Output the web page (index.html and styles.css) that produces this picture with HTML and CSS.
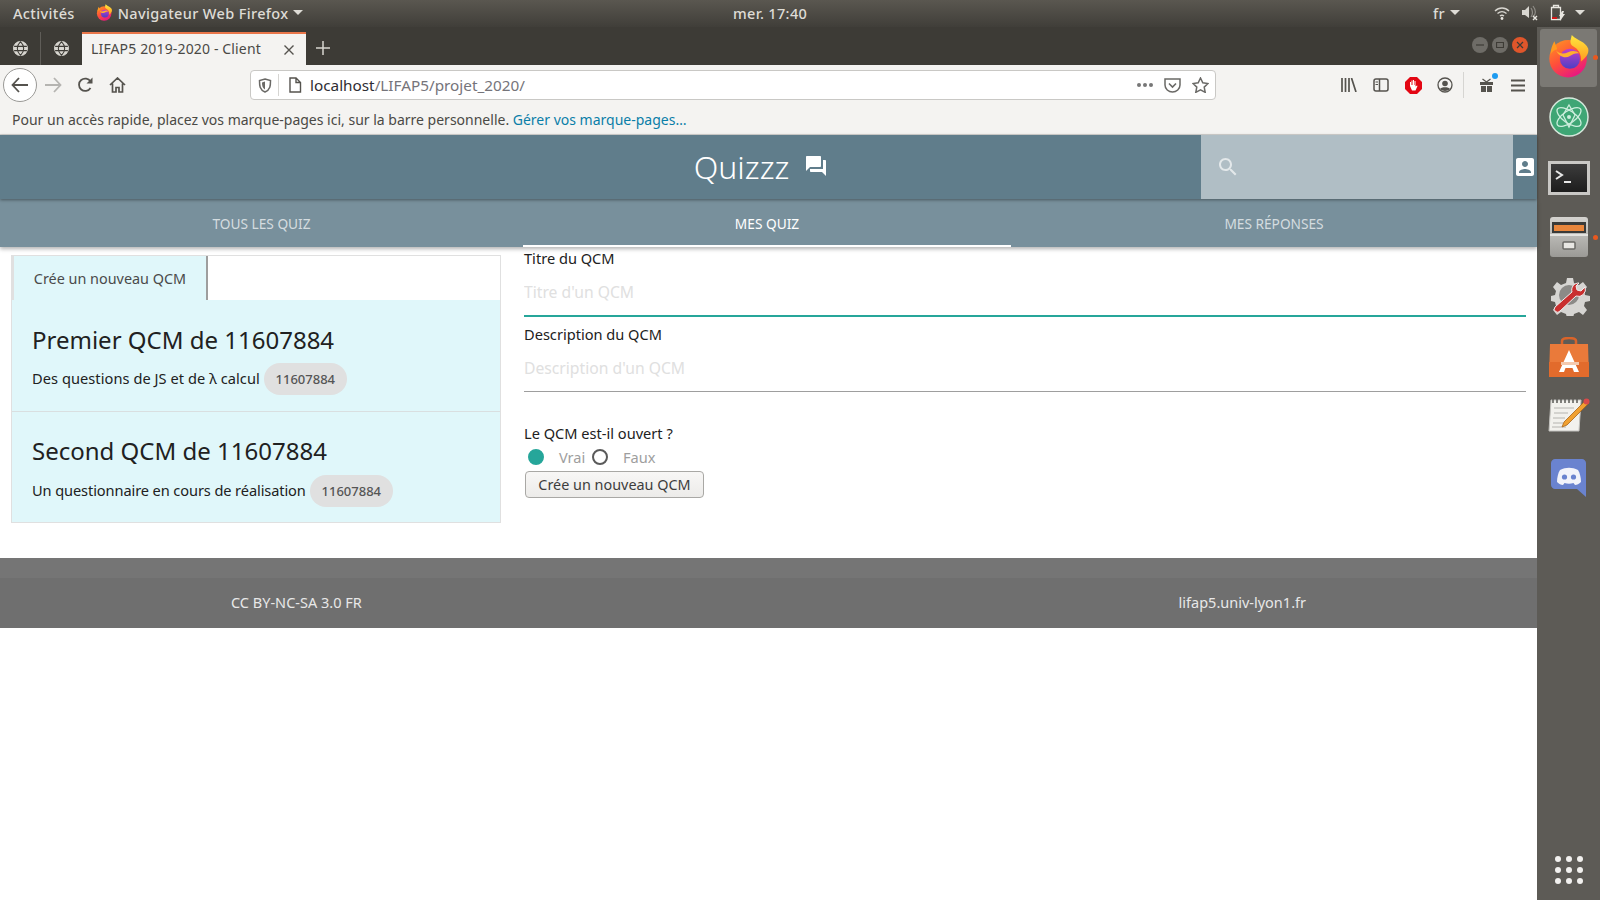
FILE: index.html
```html
<!DOCTYPE html>
<html lang="fr">

<head>
    <meta charset="UTF-8">
    <title>LIFAP5 2019-2020 - Client</title>
    <link rel="stylesheet" href="styles.css">
</head>

<body>
    <svg class="defs" width="0" height="0">
        <defs>
            <linearGradient id="ffBody" x1="0" y1="0" x2="0.6" y2="1">
                <stop offset="0" stop-color="#ff9a1f" />
                <stop offset="0.55" stop-color="#ff4f3a" />
                <stop offset="1" stop-color="#e8197f" />
            </linearGradient>
            <linearGradient id="ffFlame" x1="0.5" y1="0" x2="0.5" y2="1">
                <stop offset="0" stop-color="#ffe83f" />
                <stop offset="1" stop-color="#ff9a1f" />
            </linearGradient>
            <linearGradient id="ffCore" x1="0.5" y1="0" x2="0.5" y2="1">
                <stop offset="0" stop-color="#c23fc8" />
                <stop offset="1" stop-color="#4b3fc4" />
            </linearGradient>
            <linearGradient id="fileBody" x1="0.5" y1="0" x2="0.5" y2="1">
                <stop offset="0" stop-color="#d4d3cf" />
                <stop offset="1" stop-color="#9b9a96" />
            </linearGradient>
            <linearGradient id="termBody" x1="0.5" y1="0" x2="0.5" y2="1">
                <stop offset="0" stop-color="#3c3c3c" />
                <stop offset="1" stop-color="#1d1d1d" />
            </linearGradient>
            <symbol id="firefox" viewBox="0 0 48 48">
                <circle cx="23" cy="27" r="20.500" fill="url(#ffBody)" />
                <path d="M27 1c-1 5-3 9 1 12 6 3 10 9 9 17 5-4 9-8 8-14-3-8-11-8-18-15z" fill="url(#ffFlame)" />
                <path d="M8 8c-2 4-4 8-4 14 3-4 5-5 7-5 0-3-2-6-3-9z" fill="#ff9a1f" />
                <circle cx="25" cy="27" r="11" fill="url(#ffCore)" />
                <path d="M10 18c4 4 8 4 13 2 4-2 9-2 12 1-4-.5-7 1-10 3-5 3-12 1-15-6z" fill="#ffb02e" />
            </symbol>
            <symbol id="globe" viewBox="0 0 16 16">
                <circle cx="8" cy="8" r="6.500" fill="#d8d6d0" stroke="#d8d6d0" />
                <path d="M2 6h12M2 10h12M8 1.500c-4 4-4 9 0 13M8 1.500c4 4 4 9 0 13" fill="none" stroke="#3d3b36" stroke-width="1" />
            </symbol>
        </defs>
    </svg>

    <div class="topbar">
        <div class="top-left">
            <span class="top-activities">Activités</span>
            <svg class="top-ff" width="17" height="17"><use href="#firefox" /></svg>
            <span class="top-app">Navigateur Web Firefox</span>
            <span class="caret"></span>
        </div>
        <span class="top-clock">mer. 17:40</span>
        <div class="top-right">
            <span class="top-lang">fr</span>
            <span class="caret"></span>
            <svg class="top-wifi" width="16" height="14" viewBox="0 0 16 14">
                <path d="M1 5c4-4 10-4 14 0M3.500 7.500c3-2.500 6-2.500 9 0M6 10c1.300-1 2.700-1 4 0" fill="none" stroke="#d8d6d0" stroke-width="1.400" />
                <circle cx="8" cy="12.500" r="1.400" fill="#e8e6e0" />
            </svg>
            <svg class="top-sound" width="17" height="16" viewBox="0 0 17 16">
                <path d="M1 5h3l4-4v12l-4-3H1z" fill="#d8d6d0" />
                <path d="M10 3c2 3 2 6 0 9M12 1c3 4 3 8 0 11" fill="none" stroke="#8f8d87" stroke-width="1.200" />
                <path d="M12 11l4 4M16 11l-4 4" stroke="#e8e6e0" stroke-width="1.400" />
            </svg>
            <svg class="top-batt" width="16" height="18" viewBox="0 0 16 18">
                <path d="M1.500 3.500h9v12h-9zM3.500 1.500h5v2h-5z" fill="none" stroke="#e8e6e0" stroke-width="1.300" />
                <rect x="2" y="13" width="5" height="2" fill="#d01818" />
                <path d="M12 7l-3 5h2l-1 5 5-7h-2l1-3z" fill="#e8e6e0" />
            </svg>
            <span class="caret top-last"></span>
        </div>
    </div>

    <div class="desktop">
        <div class="browser">
            <div class="tabbar">
                <span class="pinned"><svg width="17" height="17"><use href="#globe" /></svg></span>
                <span class="pinned"><svg width="17" height="17"><use href="#globe" /></svg></span>
                <div class="tab">
                    <span class="tab-title">LIFAP5 2019-2020 - Client</span>
                    <svg width="12" height="12" viewBox="0 0 12 12">
                        <path d="M1.500 1.500l9 9M10.500 1.500l-9 9" stroke="#55534e" stroke-width="1.400" />
                    </svg>
                </div>
                <svg class="new-tab" width="14" height="14" viewBox="0 0 14 14">
                    <path d="M7 0v14M0 7h14" stroke="#d8d6d0" stroke-width="1.500" />
                </svg>
                <div class="win-btns">
                    <span class="win-btn"><svg width="8" height="8" viewBox="0 0 8 8"><path d="M0 4h8" stroke="#3d3b36" stroke-width="1.200" /></svg></span>
                    <span class="win-btn"><svg width="8" height="8" viewBox="0 0 8 8"><path d="M.5 1.500h7v5h-7z" fill="none" stroke="#3d3b36" stroke-width="1.200" /></svg></span>
                    <span class="win-btn win-close"><svg width="8" height="8" viewBox="0 0 8 8"><path d="M1 1l6 6M7 1l-6 6" stroke="#3d3b36" stroke-width="1.200" /></svg></span>
                </div>
            </div>

            <div class="toolbar">
                <span class="back">
                    <svg width="18" height="16" viewBox="0 0 18 16">
                        <path d="M8 1L1.500 8 8 15M2 8h15" fill="none" stroke="#55534e" stroke-width="1.800" />
                    </svg>
                </span>
                <span class="tool tool-forward">
                    <svg width="18" height="16" viewBox="0 0 18 16">
                        <path d="M10 1l6.500 7-6.500 7M16 8H1" fill="none" stroke="#b5b4b1" stroke-width="1.800" />
                    </svg>
                </span>
                <span class="tool">
                    <svg width="17" height="16" viewBox="0 0 17 16">
                        <path d="M13.500 11a6.200 6.200 0 1 1 0-6.500" fill="none" stroke="#55534e" stroke-width="1.800" />
                        <path d="M15.500 .5v6h-6z" fill="#55534e" />
                    </svg>
                </span>
                <span class="tool">
                    <svg width="17" height="16" viewBox="0 0 17 16">
                        <path d="M1 8l7.500-7L16 8M3.500 6.500V15h3.500v-4.500h3V15h3.500V6.500" fill="none" stroke="#55534e" stroke-width="1.700" />
                    </svg>
                </span>
                <div class="urlbar">
                    <svg class="url-shield" width="14" height="15" viewBox="0 0 14 15">
                        <path d="M7 1l5.500 1.500c0 5 0 9-5.500 11.500C1.500 11.500 1.500 7.500 1.500 2.500z" fill="none" stroke="#6a6966" stroke-width="1.500" />
                        <path d="M7 3.500v8c-2.500-1.500-3-3.500-3-7z" fill="#6a6966" />
                    </svg>
                    <span class="url-sep"></span>
                    <svg class="url-page" width="14" height="16" viewBox="0 0 14 16">
                        <path d="M2 1h6l4.500 4.500V15H2zM8 1v4.500h4.500" fill="none" stroke="#55534e" stroke-width="1.400" />
                    </svg>
                    <span class="url-text"><span class="url-host">localhost</span>/LIFAP5/projet_2020/</span>
                    <span class="url-dots"><i></i><i></i><i></i></span>
                    <svg class="url-pocket" width="17" height="15" viewBox="0 0 17 15">
                        <path d="M1 1h15v6c0 4-3.500 7-7.500 7S1 11 1 7z" fill="none" stroke="#6a6966" stroke-width="1.500" />
                        <path d="M5 5.500l3.500 3.500L12 5.500" fill="none" stroke="#6a6966" stroke-width="1.600" />
                    </svg>
                    <svg class="url-star" width="17" height="16" viewBox="0 0 17 16">
                        <path d="M8.500 1l2.300 4.800 5.200.7-3.800 3.600 1 5.200-4.700-2.500-4.700 2.500 1-5.200L1 6.500l5.200-.7z" fill="none" stroke="#6a6966" stroke-width="1.500" />
                    </svg>
                </div>
                <div class="tools-right">
                    <span class="tool">
                        <svg width="16" height="14" viewBox="0 0 16 14">
                            <path d="M1 0v14M4.500 0v14M8 0v14M10.500 0l4.500 14" stroke="#55534e" stroke-width="1.700" />
                        </svg>
                    </span>
                    <span class="tool">
                        <svg width="16" height="14" viewBox="0 0 16 14">
                            <rect x="1" y="1" width="14" height="12" rx="2" fill="none" stroke="#55534e" stroke-width="1.500" />
                            <path d="M6.500 1v12" stroke="#55534e" stroke-width="1.500" />
                            <path d="M2.500 4h2.500M2.500 6.500h2.500" stroke="#55534e" stroke-width="1" />
                        </svg>
                    </span>
                    <span class="tool">
                        <svg width="17" height="17" viewBox="0 0 17 17">
                            <path d="M5 0h7l5 5v7l-5 5H5l-5-5V5z" fill="#e30613" />
                            <path d="M5 9V5h1v3h.5V3.500h1V8H8V3h1v5h.5V4h1v5.500l1.500-1 .5.500-2 4.500H7z" fill="#fff" />
                        </svg>
                    </span>
                    <span class="tool">
                        <svg width="16" height="16" viewBox="0 0 16 16">
                            <circle cx="8" cy="8" r="7" fill="none" stroke="#55534e" stroke-width="1.300" />
                            <circle cx="8" cy="6.500" r="2.800" fill="#55534e" />
                            <path d="M3 12c1-2.500 9-2.500 10 0-2 2.500-8 2.500-10 0z" fill="#55534e" />
                        </svg>
                    </span>
                    <span class="tools-sep"></span>
                    <span class="tool tool-gift">
                        <svg width="15" height="15" viewBox="0 0 15 15">
                            <path d="M1 4h13v3H1zM2 8h5v6H2zM8 8h5v6H8z" fill="#55534e" />
                            <path d="M3.500 1l4 3 4-3" fill="none" stroke="#55534e" stroke-width="1.300" />
                        </svg>
                        <span class="gift-dot"></span>
                    </span>
                    <span class="tool">
                        <svg width="14" height="13" viewBox="0 0 14 13">
                            <path d="M0 1.500h14M0 6.500h14M0 11.500h14" stroke="#55534e" stroke-width="1.800" />
                        </svg>
                    </span>
                </div>
            </div>

            <div class="bookmarks">Pour un accès rapide, placez vos marque-pages ici, sur la barre personnelle. <a href="#">Gérer vos marque-pages…</a></div>

            <div class="page">
                <header class="app-header">
                    <div class="brand">
                        <span class="brand-name">Quizzz</span>
                        <svg width="24" height="24" viewBox="0 0 24 24" fill="#fff">
                            <path d="M21 6h-2v9H6v2c0 .55.45 1 1 1h11l4 4V7c0-.55-.45-1-1-1zm-4 6V3c0-.55-.45-1-1-1H3c-.55 0-1 .45-1 1v14l4-4h10c.55 0 1-.45 1-1z" />
                        </svg>
                    </div>
                    <div class="search">
                        <svg width="24" height="24" viewBox="0 0 24 24" fill="#e3e8ea">
                            <path d="M15.500 14h-.79l-.28-.27C15.410 12.590 16 11.110 16 9.500 16 5.910 13.090 3 9.500 3S3 5.910 3 9.500 5.910 16 9.500 16c1.610 0 3.090-.59 4.230-1.570l.27.28v.79l5 4.990L20.490 19l-4.990-5zm-6 0C7.010 14 5 11.990 5 9.500S7.010 5 9.500 5 14 7.010 14 9.500 11.990 14 9.500 14z" />
                        </svg>
                    </div>
                    <svg class="user-icon" width="24" height="24" viewBox="0 0 24 24" fill="#fff">
                        <path d="M3 5v14c0 1.100.89 2 2 2h14c1.100 0 2-.9 2-2V5c0-1.100-.9-2-2-2H5c-1.110 0-2 .9-2 2zm12 4c0 1.660-1.340 3-3 3s-3-1.340-3-3 1.340-3 3-3 3 1.340 3 3zm-9 8c0-2 4-3.100 6-3.100s6 1.100 6 3.100v1H6v-1z" />
                    </svg>
                </header>

                <nav class="nav-tabs">
                    <a class="nav-tab" href="#">TOUS LES QUIZ</a>
                    <a class="nav-tab active" href="#">MES QUIZ</a>
                    <a class="nav-tab" href="#">MES RÉPONSES</a>
                </nav>

                <main class="content">
                    <section class="quiz-list">
                        <div class="list-head">
                            <span class="new-quiz-tab">Crée un nouveau QCM</span>
                        </div>
                        <article class="quiz-item">
                            <h2>Premier QCM de 11607884</h2>
                            <p><span class="quiz-desc">Des questions de JS et de λ calcul</span> <span class="chip">11607884</span></p>
                        </article>
                        <article class="quiz-item">
                            <h2>Second QCM de 11607884</h2>
                            <p><span class="quiz-desc quiz-desc-long">Un questionnaire en cours de réalisation</span> <span class="chip">11607884</span></p>
                        </article>
                    </section>

                    <form class="quiz-form">
                        <label class="field-label" for="titre">Titre du QCM</label>
                        <input class="field field-focus" type="text" id="titre" placeholder="Titre d'un QCM">
                        <label class="field-label" for="desc">Description du QCM</label>
                        <input class="field" type="text" id="desc" placeholder="Description d'un QCM">
                        <div class="open-label">Le QCM est-il ouvert ?</div>
                        <div class="radios">
                            <span class="radio radio-on"></span><span class="radio-text">Vrai</span>
                            <span class="radio"></span><span class="radio-text">Faux</span>
                        </div>
                        <button type="button" class="submit">Crée un nouveau QCM</button>
                    </form>
                </main>

                <footer class="app-footer">
                    <div class="footer-top"></div>
                    <div class="footer-row">
                        <span>CC BY-NC-SA 3.0 FR</span>
                        <span>lifap5.univ-lyon1.fr</span>
                    </div>
                </footer>
            </div>
        </div>

        <aside class="dock">
            <div class="dock-item dock-active">
                <svg width="44" height="44"><use href="#firefox" /></svg>
                <span class="dock-dot"></span>
            </div>
            <div class="dock-item dock-atom">
                <svg width="40" height="40" viewBox="0 0 40 40">
                    <circle cx="20" cy="20" r="19" fill="#3fa675" stroke="#d5e8dc" stroke-width="1.500" />
                    <g fill="none" stroke="#cdeedd" stroke-width="1.300">
                        <ellipse cx="20" cy="20" rx="14" ry="6" transform="rotate(35 20 20)" />
                        <ellipse cx="20" cy="20" rx="14" ry="6" transform="rotate(-35 20 20)" />
                        <path d="M20 8l6 10-6 12-6-12z" />
                    </g>
                    <circle cx="20" cy="20" r="2" fill="#cdeedd" />
                </svg>
            </div>
            <div class="dock-item dock-term">
                <svg width="42" height="36" viewBox="0 0 42 36">
                    <rect x="0" y="0" width="42" height="34" fill="#c9c8c5" />
                    <rect x="3" y="3" width="36" height="28" fill="url(#termBody)" />
                    <path d="M8 10l6 4-6 4" fill="none" stroke="#e8e8e8" stroke-width="2" />
                    <path d="M16 21h7" stroke="#e8e8e8" stroke-width="2" />
                </svg>
            </div>
            <div class="dock-item dock-files">
                <svg width="40" height="42" viewBox="0 0 40 42">
                    <rect x="1" y="1" width="38" height="40" rx="3" fill="url(#fileBody)" />
                    <rect x="3" y="6" width="34" height="11" fill="#3a3a38" />
                    <rect x="5" y="9" width="30" height="6" fill="#e8863c" />
                    <rect x="1" y="18" width="38" height="2" fill="#e4e3df" />
                    <rect x="14" y="26" width="12" height="7" rx="1" fill="#e8e7e3" stroke="#6a6966" stroke-width="1.500" />
                </svg>
                <span class="dock-dot"></span>
            </div>
            <div class="dock-item dock-tools">
                <svg width="42" height="42" viewBox="0 0 42 42">
                    <path d="M21 4l4 0 1 5 5 2 4-3 4 5-3 4 1 4 5 1v5l-5 1-1 4 3 4-4 5-4-3-5 2-1 4h-6l-1-4-5-2-4 3-4-5 3-4-1-4-4-1v-5l4-1 1-4-3-4 4-5 4 3 5-2 1-5z" fill="#d6d5d2" />
                    <circle cx="21" cy="21" r="10" fill="#8b8a87" />
                    <path d="M31 9a7 7 0 0 0-7 9L7 33a3 3 0 0 0 5 4l16-15a7 7 0 0 0 9-9l-4 4-4-1-1-4z" fill="#c92f2f" stroke="#eee" stroke-width="1" />
                </svg>
            </div>
            <div class="dock-item">
                <svg width="42" height="42" viewBox="0 0 42 42">
                    <path d="M14 8V4c0-2 2-3 7-3s7 1 7 3v4" fill="none" stroke="#d9642a" stroke-width="2.500" />
                    <path d="M2 7h38l1 33H1z" fill="#ea7a3a" />
                    <path d="M1 25h40v15H1z" fill="#e26b2c" />
                    <path d="M21 13l10 22h-5l-1.500-4h-7L16 35h-5z" fill="#fff" />
                    <rect x="13" y="25" width="18" height="3" fill="#f4c9ae" />
                </svg>
            </div>
            <div class="dock-item dock-note">
                <svg width="42" height="36" viewBox="0 0 42 36">
                    <path d="M3 4h30l-2 31H1z" fill="#f2f1ed" stroke="#c2c1bd" />
                    <path d="M5 3v4M9 3v4M13 3v4M17 3v4M21 3v4M25 3v4M29 3v4" stroke="#5a5955" stroke-width="1.500" />
                    <path d="M6 12h20M6 17h14M5 22h12M5 27h10M4 31h14" stroke="#b5b4b0" stroke-width="1" />
                    <path d="M38 4l3 3-22 22-5 2 2-5z" fill="#f0a030" stroke="#a8651a" stroke-width=".8" />
                    <circle cx="38.500" cy="5.500" r="3" fill="#d84a4a" />
                </svg>
            </div>
            <div class="dock-item">
                <svg width="36" height="38" viewBox="0 0 36 38">
                    <path d="M4 0h27c2 0 4 2 4 4v34l-9-8H4c-2 0-4-2-4-4V4c0-2 2-4 4-4z" fill="#6a83cf" />
                    <path d="M9 11c6-3 12-3 18 0 2 3 3 8 3 12-2 2-4 3-6 3l-1.500-2c-3 1-6 1-9 0L12 26c-2 0-4-1-6-3 0-4 1-9 3-12z" fill="#f2f3fa" />
                    <circle cx="13.500" cy="18" r="2.600" fill="#6a83cf" />
                    <circle cx="22.500" cy="18" r="2.600" fill="#6a83cf" />
                </svg>
            </div>
            <div class="apps-grid">
                <i></i><i></i><i></i><i></i><i></i><i></i><i></i><i></i><i></i>
            </div>
        </aside>
    </div>
</body>

</html>
```

FILE: styles.css
```css
* {
    box-sizing: border-box;
}

html,
body {
    margin: 0;
    height: 100%;
    overflow: hidden;
}

body {
    font-family: "Noto Sans", sans-serif;
    font-size: 14px;
    color: #212121;
    background-color: #fff;
}

.defs {
    display: block;
    height: 0;
}

/* barre du haut */
.topbar {
    display: flex;
    align-items: center;
    height: 27px;
    padding-bottom: 2px;
    background: linear-gradient(#5a5750, #403e39);
    color: #dedcd6;
    font-size: 14.500px;
    font-weight: 500;
    letter-spacing: .35px;
    white-space: nowrap;
}

.top-left,
.top-right {
    display: flex;
    align-items: center;
}

.top-left {
    width: 733px;
}

.top-right {
    margin-left: auto;
}

.top-activities {
    margin-left: 13px;
}

.top-ff {
    margin-left: 21px;
}

.top-app {
    margin-left: 5px;
}

.caret {
    width: 0;
    height: 0;
    margin-left: 5px;
    border-left: 5px solid transparent;
    border-right: 5px solid transparent;
    border-top: 5px solid #dedcd6;
}

.top-clock {
    width: 72px;
    text-align: center;
}

.top-wifi {
    margin-left: 34px;
}

.top-sound {
    margin-left: 11px;
}

.top-batt {
    margin-left: 12px;
}

.top-last {
    margin-left: 9px;
    margin-right: 15px;
}

.desktop {
    display: flex;
    height: 873px;
}

.browser {
    width: 1537px;
    display: flex;
    flex-direction: column;
}

/* onglets firefox */
.tabbar {
    display: flex;
    align-items: flex-end;
    height: 38px;
    background-color: #3d3b36;
    color: #dedcd6;
}

.pinned {
    display: flex;
    align-items: center;
    justify-content: center;
    width: 41px;
    height: 33px;
    border-right: 1px solid #5f5d58;
}

.pinned:nth-child(2) {
    border-right: none;
}

.tab {
    display: flex;
    align-items: center;
    justify-content: space-between;
    width: 224px;
    height: 33px;
    padding: 0 11px 0 9px;
    background-color: #f4f3f1;
    border-top: 2px solid #e9764a;
    color: #4a4945;
    font-size: 14px;
    letter-spacing: .15px;
}

.tab-title {
    padding-bottom: 2px;
}

.new-tab {
    margin: 0 0 10px 10px;
}

.win-btns {
    display: flex;
    gap: 4px;
    margin: 0 9px 12px auto;
}

.win-btn {
    display: flex;
    align-items: center;
    justify-content: center;
    width: 16px;
    height: 16px;
    border-radius: 50%;
    background-color: #6e6c67;
}

.win-close {
    background-color: #e0562b;
}

/* barre d'adresse */
.toolbar {
    display: flex;
    align-items: center;
    height: 40px;
    padding-left: 3px;
    background-color: #f4f3f1;
}

.back {
    display: flex;
    align-items: center;
    justify-content: center;
    width: 34px;
    height: 34px;
    border: 1px solid #9a9996;
    border-radius: 50%;
    background-color: #fff;
}

.tool {
    display: flex;
    align-items: center;
    justify-content: center;
    width: 32px;
    height: 30px;
}

.urlbar {
    display: flex;
    align-items: center;
    width: 966px;
    height: 30px;
    margin-left: 117px;
    padding: 0 6px 0 7px;
    background-color: #fff;
    border: 1px solid #c9c8c5;
    border-radius: 4px;
}

.url-sep {
    width: 1px;
    height: 22px;
    margin: 0 9px 0 6px;
    background-color: #d6d5d2;
}

.url-text {
    margin-left: 8px;
    font-size: 15.300px;
    color: #75747a;
}

.url-host {
    color: #2e2d33;
}

.url-dots {
    display: flex;
    gap: 2px;
    margin-left: auto;
}

.url-dots i {
    width: 4px;
    height: 4px;
    border-radius: 50%;
    background-color: #777;
}

.url-pocket {
    margin-left: 11px;
}

.url-star {
    margin-left: 11px;
}

.tools-right {
    display: flex;
    align-items: center;
    margin-left: 117px;
}

.tools-sep {
    width: 1px;
    height: 26px;
    margin: 0 6px 0 2px;
    background-color: #d6d5d2;
}

.tool-gift {
    position: relative;
}

.gift-dot {
    position: absolute;
    top: 3px;
    right: 4px;
    width: 6px;
    height: 6px;
    border-radius: 50%;
    background-color: #1e9bf0;
}

.bookmarks {
    height: 30px;
    padding: 5px 12px 0;
    background-color: #f4f3f1;
    border-bottom: 1px solid #d6d5d2;
    color: #4a4945;
    font-size: 14px;
}

.bookmarks a {
    color: #0a7ea8;
    text-decoration: none;
}

/* page du quiz */
.page {
    flex: 1;
    background-color: #fff;
}

.app-header {
    position: relative;
    z-index: 2;
    display: flex;
    height: 64px;
    background-color: #607d8b;
    box-shadow: 0 1px 3px rgba(0, 0, 0, .4);
    color: #fff;
}

.brand {
    flex: 1;
    display: flex;
    align-items: center;
    justify-content: center;
    gap: 15px;
    padding: 0 0 2px 321px;
}

.brand-name {
    font-size: 32px;
    font-weight: 300;
}

.search {
    display: flex;
    align-items: center;
    width: 312px;
    height: 64px;
    padding-left: 15px;
    background-color: #b0bec5;
}

.user-icon {
    align-self: center;
    width: 24px;
}

.nav-tabs {
    position: relative;
    z-index: 1;
    display: grid;
    grid-template-columns: 523px 488px 1fr;
    height: 48px;
    background-color: #78909c;
    box-shadow: 0 2px 4px rgba(0, 0, 0, .3);
}

.nav-tab {
    display: flex;
    align-items: center;
    justify-content: center;
    padding-top: 2px;
    border-bottom: 2px solid transparent;
    color: rgba(255, 255, 255, .7);
    font-size: 13.700px;
    text-decoration: none;
}

.nav-tab.active {
    color: #fff;
    border-bottom-color: #fff;
}

.content {
    display: flex;
    align-items: flex-start;
}

.quiz-list {
    width: 490px;
    margin: 8px 0 35px 11px;
    border: 1px solid #e0e0e0;
}

.list-head {
    height: 44px;
}

.new-quiz-tab {
    display: flex;
    align-items: center;
    justify-content: center;
    width: 196px;
    height: 44px;
    background-color: #e0f7fa;
    border-left: 2px solid #e0e0e0;
    border-right: 2px solid #9e9e9e;
    color: #4a4a4a;
    font-size: 14.400px;
}

.quiz-item {
    height: 111px;
    padding: 23px 20px 0;
    background-color: #e0f7fa;
}

.quiz-item + .quiz-item {
    padding-top: 22px;
    border-top: 1px solid #d9dfe0;
}

.quiz-item h2 {
    margin: 0;
    font-size: 24px;
    font-weight: 400;
    line-height: 34px;
}

.quiz-item p {
    display: flex;
    align-items: center;
    gap: 4px;
    margin: 6px 0 0;
    font-size: 14.600px;
}

.quiz-item + .quiz-item p {
    margin-top: 7px;
}

.quiz-desc {
    padding-bottom: 2px;
    letter-spacing: .06px;
}

.quiz-desc-long {
    letter-spacing: -.1px;
}

.chip {
    display: inline-flex;
    align-items: center;
    justify-content: center;
    width: 83px;
    height: 32px;
    border-radius: 16px;
    background-color: #e0e0e0;
    color: #555;
    font-size: 13px;
    font-weight: 500;
}

.quiz-form {
    width: 1002px;
    margin-left: 23px;
    padding-top: 2px;
}

.field-label {
    display: block;
    margin: -1px 0 1px;
    font-size: 14.600px;
    line-height: 20px;
}

.field {
    display: block;
    width: 100%;
    height: 47px;
    margin-bottom: 9px;
    padding: 0;
    border: none;
    border-bottom: 1px solid #9e9e9e;
    outline: none;
    font-family: "Noto Sans", sans-serif;
    font-size: 15.700px;
}

.field-focus {
    height: 48px;
    margin-bottom: 8px;
    border-bottom: 2px solid #26a69a;
}

.field::placeholder {
    color: #e0e0e0;
}

.open-label {
    margin: 31px 0 1px;
    font-size: 14.600px;
    line-height: 20px;
}

.radios {
    display: flex;
    align-items: center;
    height: 24px;
    margin-top: 2px;
}

.radio {
    width: 16px;
    height: 16px;
    margin-left: 4px;
    border: 2px solid #5a5a5a;
    border-radius: 50%;
}

.radio-on {
    margin-left: 4px;
    border-color: #26a69a;
    background-color: #26a69a;
}

.radio-text {
    width: 34px;
    margin: 0 0 0 15px;
    color: #9e9e9e;
    font-size: 14.600px;
}

.radio + .radio-text + .radio {
    margin-left: -1px;
}

.submit {
    display: block;
    width: 179px;
    height: 27px;
    margin: 2px 0 0 1px;
    padding: 0;
    background: linear-gradient(#f8f7f6, #ecebe9);
    border: 1px solid #a9a8a5;
    border-radius: 4px;
    color: #3d3d3d;
    font-family: "Noto Sans", sans-serif;
    font-size: 14.400px;
}

.app-footer {
    color: #e8e8e8;
    font-size: 14.500px;
}

.footer-top {
    height: 20px;
    background-color: #757575;
}

.footer-row {
    display: flex;
    align-items: center;
    justify-content: space-between;
    height: 50px;
    padding: 0 231px 2px;
    background-color: #6f6f6f;
}

/* dock ubuntu */
.dock {
    width: 63px;
    display: flex;
    flex-direction: column;
    background-color: #5d5b56;
    padding-top: 1px;
}

.dock-item {
    position: relative;
    display: flex;
    flex: none;
    align-items: center;
    justify-content: center;
    width: 63px;
    height: 60px;
}

.dock-active::before {
    content: "";
    position: absolute;
    left: 3px;
    top: 1px;
    width: 57px;
    height: 58px;
    border-radius: 3px;
    background-color: #7b7974;
}

.dock-active svg {
    position: relative;
    margin-bottom: 5px;
}

.dock-atom svg {
    margin-bottom: 2px;
}

.dock-term svg {
    margin-top: 1px;
}

.dock-files svg {
    margin-bottom: 2px;
}

.dock-tools svg {
    margin-bottom: 6px;
}

.dock-note svg {
    margin-bottom: 8px;
}

.dock-dot {
    position: absolute;
    top: 27px;
    right: 2px;
    width: 5px;
    height: 5px;
    border-radius: 50%;
    background-color: #e9581f;
}

.apps-grid {
    display: grid;
    grid-template-columns: repeat(3, 6px);
    gap: 5px;
    justify-content: center;
    margin-top: auto;
    margin-bottom: 16px;
}

.apps-grid i {
    width: 6px;
    height: 6px;
    border-radius: 50%;
    background-color: #f2f1ef;
}
```
